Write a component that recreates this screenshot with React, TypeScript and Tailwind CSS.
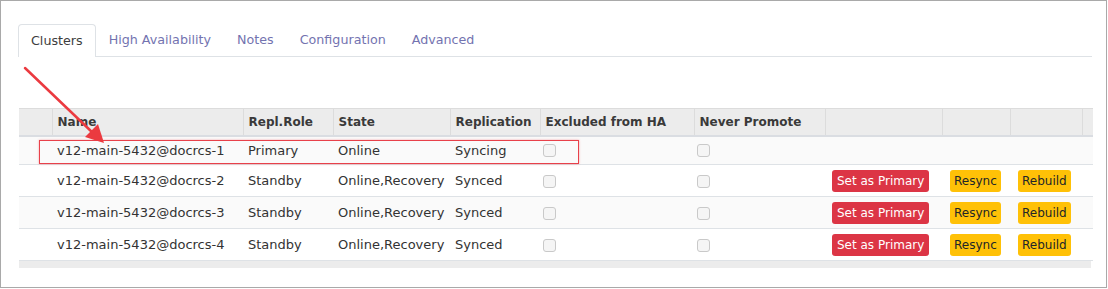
import React from 'react'

const tabs = ['Clusters', 'High Availability', 'Notes', 'Configuration', 'Advanced']

const rows = [
    { name: 'v12-main-5432@docrcs-1', role: 'Primary', state: 'Online', repl: 'Syncing', actions: false },
    { name: 'v12-main-5432@docrcs-2', role: 'Standby', state: 'Online,Recovery', repl: 'Synced', actions: true },
    { name: 'v12-main-5432@docrcs-3', role: 'Standby', state: 'Online,Recovery', repl: 'Synced', actions: true },
    { name: 'v12-main-5432@docrcs-4', role: 'Standby', state: 'Online,Recovery', repl: 'Synced', actions: true },
]

const widths = ['w-[33px]', 'w-[191px]', 'w-[90px]', 'w-[117px]', 'w-[90px]', 'w-[154px]', 'w-[131px]', 'w-[117px]', 'w-[68px]', 'w-[72px]', 'w-[9px]']
const headers = ['', 'Name', 'Repl.Role', 'State', 'Replication', 'Excluded from HA', 'Never Promote', '', '', '', '']

const Checkbox = () => (
    <span className="inline-block w-[13px] h-[13px] rounded-[3px] border border-[#c9c9c9] bg-[#f5f5f5] align-middle" />
)

const App: React.FC = () => {
    return (
        <div className="relative w-[1107px] h-[288px] border border-[#a9a9a9] bg-white font-['DejaVu_Sans',sans-serif] text-[13px] text-[#333]">
            {/* tabs */}
            <div className="ml-[17px] mr-[14px] mt-[23px] flex border-b border-[#dee2e6] text-[12.7px]">
                {tabs.map((t, i) => (
                    <div
                        key={t}
                        className={
                            i === 0
                                ? 'px-[12px] flex items-center rounded-t-[4px] border border-b-0 border-[#dee2e6] bg-white text-[#3d3d3d] -mb-px h-[33px]'
                                : 'h-[32px] px-[13px] flex items-center text-[#7373b0]'
                        }
                    >
                        {t}
                    </div>
                ))}
            </div>

            {/* table */}
            <div className="ml-[18px] mt-[51px] w-[1072px]">
                <table className="table-fixed border-collapse w-[1072px]">
                    <thead>
                        <tr className="bg-[#ececec] border-t border-[#dcdcdc] border-b-2 border-b-[#dadde2]">
                            {headers.map((h, i) => (
                                <th
                                    key={i}
                                    className={`${widths[i]} h-[27px] px-[5px] text-left font-bold text-[12px] text-[#3a3a3a] whitespace-nowrap ${i > 0 ? 'border-l border-[#dcdcdc]' : ''}`}
                                >
                                    {h}
                                </th>
                            ))}
                        </tr>
                    </thead>
                    <tbody>
                        {rows.map((r, ri) => (
                            <tr key={r.name} className={`${ri % 2 === 0 ? 'bg-[#fafafa]' : 'bg-white'} border-b border-[#dee2e6]`}>
                                <td className={`${r.actions ? 'h-[32px]' : 'h-[29px]'}`} />
                                <td className="px-[5px] whitespace-nowrap">{r.name}</td>
                                <td className="px-[5px] whitespace-nowrap">{r.role}</td>
                                <td className="px-[5px] whitespace-nowrap">{r.state}</td>
                                <td className="px-[5px] whitespace-nowrap">{r.repl}</td>
                                <td className="px-[3px] leading-none"><Checkbox /></td>
                                <td className="px-[3px] leading-none"><Checkbox /></td>
                                <td className="pl-[7px] text-[12px]">
                                    {r.actions && (
                                        <span className="inline-flex items-center h-[22px] px-[5px] rounded-[3px] bg-[#dc3545] text-white">Set as Primary</span>
                                    )}
                                </td>
                                <td className="pl-[8px] text-[12px]">
                                    {r.actions && (
                                        <span className="inline-flex items-center h-[22px] px-[4px] rounded-[3px] bg-[#ffc107] text-[#212529]">Resync</span>
                                    )}
                                </td>
                                <td className="pl-[8px] text-[12px]">
                                    {r.actions && (
                                        <span className="inline-flex items-center h-[22px] px-[4px] rounded-[3px] bg-[#ffc107] text-[#212529]">Rebuild</span>
                                    )}
                                </td>
                                <td />
                            </tr>
                        ))}
                    </tbody>
                </table>
                <div className="h-[7px] bg-[#ececec]" />
            </div>

            {/* annotation: highlight box */}
            <div className="absolute left-[38px] top-[139px] w-[540px] h-[24px] border-[1.5px] border-[#e8414a] shadow-[0_0_2px_rgba(240,100,110,0.6)]" />

            {/* annotation: arrow */}
            <svg className="absolute left-0 top-0" width="1107" height="288" viewBox="0 0 1107 288">
                <line x1="24" y1="67" x2="92" y2="132" stroke="#eb3a40" strokeWidth="2.5" strokeLinecap="round" />
                <polygon points="103,142 84,136 97,123" fill="#eb3a40" />
            </svg>
        </div>
    )
}

export default App
